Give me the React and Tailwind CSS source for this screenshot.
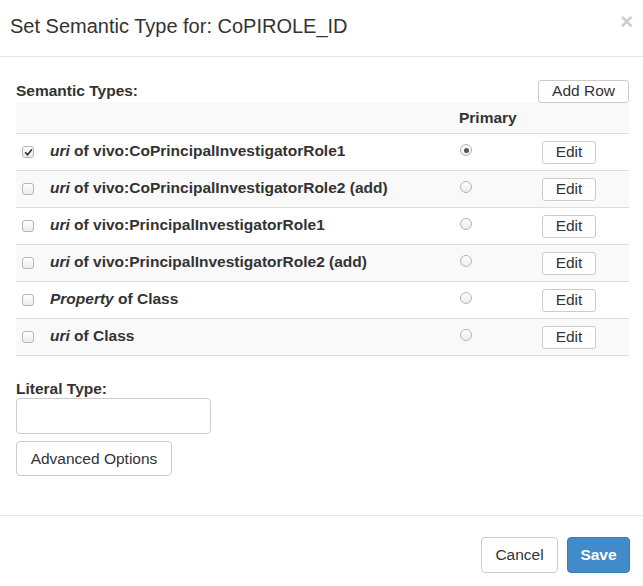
import { useState } from "react";

const rows = [
  { em: "uri", rest: " of vivo:CoPrincipalInvestigatorRole1", checked: true, primary: true },
  { em: "uri", rest: " of vivo:CoPrincipalInvestigatorRole2 (add)" },
  { em: "uri", rest: " of vivo:PrincipalInvestigatorRole1" },
  { em: "uri", rest: " of vivo:PrincipalInvestigatorRole2 (add)" },
  { em: "Property", rest: " of Class" },
  { em: "uri", rest: " of Class" },
];

function Checkbox({ checked }) {
  return (
    <span className="w-[12px] h-[12px] rounded-[3px] border border-[#b5b5b5] bg-gradient-to-b from-white to-[#ececec] flex items-center justify-center">
      {checked && (
        <svg width="9" height="9" viewBox="0 0 10 10">
          <path d="M1.8 5.2 L4 7.6 L8.4 2" fill="none" stroke="#333" strokeWidth="1.8" strokeLinecap="round" strokeLinejoin="round" />
        </svg>
      )}
    </span>
  );
}

function Radio({ on }) {
  return (
    <span className="w-[12px] h-[12px] rounded-full border border-[#b5b5b5] bg-gradient-to-b from-white to-[#ececec] flex items-center justify-center">
      {on && <span className="w-[5px] h-[5px] rounded-full bg-[#555]" />}
    </span>
  );
}

export default function App() {
  const [literal, setLiteral] = useState("");

  return (
    <div className="w-[643px] h-[586px] bg-white text-[#333] font-['Liberation_Sans',Arial,sans-serif] text-[15.5px] flex flex-col">
      {/* header */}
      <div className="h-[57px] shrink-0 border-b border-[#e5e5e5] flex items-center justify-between pl-[10px] pr-[10px]">
        <h4 className="text-[20px] leading-[22px] text-[#333] -mt-[5px]">Set Semantic Type for: CoPIROLE_ID</h4>
        <span className="text-[22px] leading-none font-bold text-[#ccc] -mt-[12px]">×</span>
      </div>

      {/* body */}
      <div className="h-[458px] shrink-0 pl-[16px] pr-[14px] pt-[22px] flex flex-col">
        <div className="flex items-center justify-between h-[24px]">
          <span className="font-bold -mt-[1px]">Semantic Types:</span>
          <button className="w-[91px] h-[23px] border border-[#ccc] rounded-[3px] bg-white leading-none">Add Row</button>
        </div>

        <div className="flex flex-col">
          <div className="h-[31px] bg-[#f9f9f9] border-b border-[#ddd] flex items-center">
            <span className="ml-[443px] font-bold">Primary</span>
          </div>
          {rows.map((r, i) => (
            <div
              key={i}
              className={`h-[37px] border-b border-[#ddd] flex items-center ${i % 2 === 1 ? "bg-[#f9f9f9]" : "bg-white"}`}
            >
              <div className="w-[34px] pl-[6px] flex items-center">
                <Checkbox checked={r.checked} />
              </div>
              <div className="w-[409px] font-bold -mt-[3px]">
                <em>{r.em}</em>
                {r.rest}
              </div>
              <div className="w-[83px] pl-[1px] -mt-[4px] flex items-center">
                <Radio on={r.primary} />
              </div>
              <button className="w-[54px] h-[23px] border border-[#ccc] rounded-[3px] bg-white leading-none">Edit</button>
            </div>
          ))}
        </div>

        <label className="font-bold mt-[24px] leading-[18px]">Literal Type:</label>
        <input
          value={literal}
          onChange={(e) => setLiteral(e.target.value)}
          className="w-[195px] h-[36px] border border-[#ccc] rounded-[4px] px-[10px] outline-none"
        />
        <button className="mt-[7px] w-[156px] h-[35px] border border-[#ccc] rounded-[4px] bg-white">Advanced Options</button>
      </div>

      {/* footer */}
      <div className="flex-1 border-t border-[#e5e5e5] flex items-start justify-end gap-[9px] pr-[13px] pt-[21px]">
        <button className="w-[77px] h-[36px] border border-[#ccc] rounded-[4px] bg-white">Cancel</button>
        <button className="w-[63px] h-[36px] border border-[#357ebd] rounded-[4px] bg-[#428bca] text-white font-bold">Save</button>
      </div>
    </div>
  );
}
